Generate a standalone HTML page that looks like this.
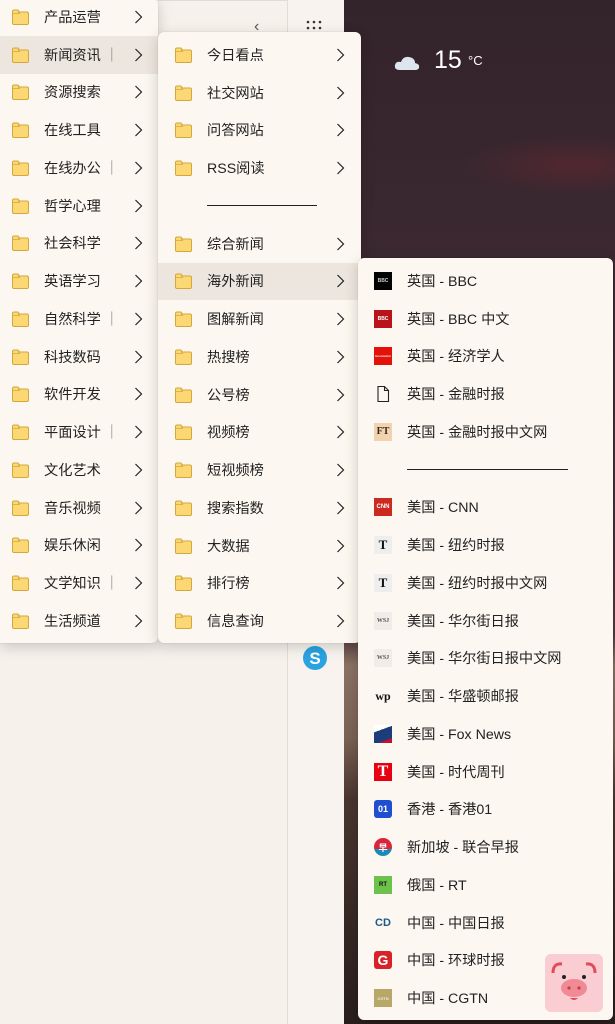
<!DOCTYPE html>
<html><head><meta charset="utf-8"><style>
*{margin:0;padding:0;box-sizing:border-box}
body{width:615px;height:1024px;overflow:hidden;position:relative;background:#f6f1eb;font-family:"Liberation Sans","Noto Sans CJK SC",sans-serif;color:#222}
.bgr{position:absolute;left:344px;top:0;width:271px;height:1024px;background:
radial-gradient(ellipse 110px 30px at 230px 165px,rgba(130,40,50,.35),transparent),
radial-gradient(ellipse 140px 60px at 230px 580px,rgba(110,40,45,.3),transparent),
linear-gradient(180deg,#33232b 0%,#3d2a32 30%,#46303a 55%,#553c40 62%,#8a7264 65%,#7a6254 72%,#4a3630 78%,#3a2a26 88%,#2a1e1c 100%)}
.col2{position:absolute;left:287px;top:0;width:57px;height:1024px;background:#f8f3ee;border-left:1px solid #e2ddd7}
.top1{position:absolute;left:158px;top:0;width:129px;height:1px;background:#ddd}
.menu{position:absolute;background:#fcf7f0;border-radius:6px;box-shadow:0 4px 14px rgba(0,0,0,.18),0 0 1px rgba(0,0,0,.2)}
.it{height:37.75px;display:flex;align-items:center;position:relative;font-size:14.2px;white-space:nowrap}
.it.h{background:#ede6de}
.ic{position:absolute;top:50%;transform:translateY(-50%);width:19px;height:17px}
.ch{position:absolute;top:50%;transform:translateY(-50%);width:9px;height:14px}
.sep{height:37.75px;position:relative}
.sep div{position:absolute;top:18px;height:1.4px;background:#222}
.lg{position:absolute;left:16px;top:50%;transform:translateY(-50%);width:18px;height:18px;font-size:6px;display:flex;align-items:center;justify-content:center;font-weight:bold;overflow:hidden}
.bar{color:#777}
</style></head><body>
<div class="bgr"></div>
<div class="col2"></div>
<div class="top1"></div>
<div style="position:absolute;left:254px;top:18px;font-size:16px;color:#555">‹</div>
<svg style="position:absolute;left:306px;top:20px" width="16" height="14"><g fill="#333"><circle cx="2" cy="2" r="1.3"/><circle cx="8" cy="2" r="1.3"/><circle cx="14" cy="2" r="1.3"/><circle cx="2" cy="8" r="1.3"/><circle cx="8" cy="8" r="1.3"/><circle cx="14" cy="8" r="1.3"/></g></svg>
<svg style="position:absolute;left:394px;top:54px" width="26" height="18"><path d="M6 16 Q0 16 1 11 Q2 7 7 8 Q9 2 15 3 Q21 4 21 9 Q26 10 25 14 Q24 16 21 16 Z" fill="#dde6ee"/></svg>
<div style="position:absolute;left:434px;top:46px;font-size:25px;color:#fff">15</div>
<div style="position:absolute;left:468px;top:53px;font-size:13px;color:#fff">°C</div>
<svg style="position:absolute;left:302px;top:645px" width="26" height="26"><circle cx="13" cy="13" r="12" fill="#2aa3e0"/><text x="13" y="19" font-size="17" font-weight="bold" fill="#fff" text-anchor="middle" font-family="Liberation Sans">S</text></svg>

<svg width="0" height="0" style="position:absolute"><defs>
<symbol id="f" viewBox="0 0 19 17"><path d="M1.5 3 Q1.5 1.5 3 1.5 H7 L8.5 3.5 H16 Q17.5 3.5 17.5 5 V14.5 Q17.5 16 16 16 H3 Q1.5 16 1.5 14.5 Z" fill="#fbd874" stroke="#d4a73c" stroke-width="1"/><path d="M1.5 5 H8.5 L7 3" fill="none" stroke="#d4a73c" stroke-width=".8"/></symbol>
<symbol id="c" viewBox="0 0 9 14"><path d="M1.5 1 L7.5 7 L1.5 13" fill="none" stroke="#222" stroke-width="1.2"/></symbol>
</defs></svg>

<!-- Menu 1 -->
<div class="menu" style="left:0;top:-2px;width:158px;height:645px;border-radius:0 6px 6px 0">
<div class="it"><svg class="ic" style="left:11px"><use href="#f"/></svg><span style="margin-left:44px">产品运营</span><svg class="ch" style="left:134px"><use href="#c"/></svg></div>
<div class="it h"><svg class="ic" style="left:11px"><use href="#f"/></svg><span style="margin-left:44px">新闻资讯 <span class="bar">｜</span></span><svg class="ch" style="left:134px"><use href="#c"/></svg></div>
<div class="it"><svg class="ic" style="left:11px"><use href="#f"/></svg><span style="margin-left:44px">资源搜索</span><svg class="ch" style="left:134px"><use href="#c"/></svg></div>
<div class="it"><svg class="ic" style="left:11px"><use href="#f"/></svg><span style="margin-left:44px">在线工具</span><svg class="ch" style="left:134px"><use href="#c"/></svg></div>
<div class="it"><svg class="ic" style="left:11px"><use href="#f"/></svg><span style="margin-left:44px">在线办公 <span class="bar">｜</span></span><svg class="ch" style="left:134px"><use href="#c"/></svg></div>
<div class="it"><svg class="ic" style="left:11px"><use href="#f"/></svg><span style="margin-left:44px">哲学心理</span><svg class="ch" style="left:134px"><use href="#c"/></svg></div>
<div class="it"><svg class="ic" style="left:11px"><use href="#f"/></svg><span style="margin-left:44px">社会科学</span><svg class="ch" style="left:134px"><use href="#c"/></svg></div>
<div class="it"><svg class="ic" style="left:11px"><use href="#f"/></svg><span style="margin-left:44px">英语学习</span><svg class="ch" style="left:134px"><use href="#c"/></svg></div>
<div class="it"><svg class="ic" style="left:11px"><use href="#f"/></svg><span style="margin-left:44px">自然科学 <span class="bar">｜</span></span><svg class="ch" style="left:134px"><use href="#c"/></svg></div>
<div class="it"><svg class="ic" style="left:11px"><use href="#f"/></svg><span style="margin-left:44px">科技数码</span><svg class="ch" style="left:134px"><use href="#c"/></svg></div>
<div class="it"><svg class="ic" style="left:11px"><use href="#f"/></svg><span style="margin-left:44px">软件开发</span><svg class="ch" style="left:134px"><use href="#c"/></svg></div>
<div class="it"><svg class="ic" style="left:11px"><use href="#f"/></svg><span style="margin-left:44px">平面设计 <span class="bar">｜</span></span><svg class="ch" style="left:134px"><use href="#c"/></svg></div>
<div class="it"><svg class="ic" style="left:11px"><use href="#f"/></svg><span style="margin-left:44px">文化艺术</span><svg class="ch" style="left:134px"><use href="#c"/></svg></div>
<div class="it"><svg class="ic" style="left:11px"><use href="#f"/></svg><span style="margin-left:44px">音乐视频</span><svg class="ch" style="left:134px"><use href="#c"/></svg></div>
<div class="it"><svg class="ic" style="left:11px"><use href="#f"/></svg><span style="margin-left:44px">娱乐休闲</span><svg class="ch" style="left:134px"><use href="#c"/></svg></div>
<div class="it"><svg class="ic" style="left:11px"><use href="#f"/></svg><span style="margin-left:44px">文学知识 <span class="bar">｜</span></span><svg class="ch" style="left:134px"><use href="#c"/></svg></div>
<div class="it"><svg class="ic" style="left:11px"><use href="#f"/></svg><span style="margin-left:44px">生活频道</span><svg class="ch" style="left:134px"><use href="#c"/></svg></div>
</div>

<!-- Menu 2 -->
<div class="menu" style="left:158px;top:32px;width:203px;height:611px;padding-top:4px">
<div class="it"><svg class="ic" style="left:16px"><use href="#f"/></svg><span style="margin-left:49px">今日看点</span><svg class="ch" style="left:178px"><use href="#c"/></svg></div>
<div class="it"><svg class="ic" style="left:16px"><use href="#f"/></svg><span style="margin-left:49px">社交网站</span><svg class="ch" style="left:178px"><use href="#c"/></svg></div>
<div class="it"><svg class="ic" style="left:16px"><use href="#f"/></svg><span style="margin-left:49px">问答网站</span><svg class="ch" style="left:178px"><use href="#c"/></svg></div>
<div class="it"><svg class="ic" style="left:16px"><use href="#f"/></svg><span style="margin-left:49px">RSS阅读</span><svg class="ch" style="left:178px"><use href="#c"/></svg></div>
<div class="sep"><div style="left:49px;width:110px"></div></div>
<div class="it"><svg class="ic" style="left:16px"><use href="#f"/></svg><span style="margin-left:49px">综合新闻</span><svg class="ch" style="left:178px"><use href="#c"/></svg></div>
<div class="it h"><svg class="ic" style="left:16px"><use href="#f"/></svg><span style="margin-left:49px">海外新闻</span><svg class="ch" style="left:178px"><use href="#c"/></svg></div>
<div class="it"><svg class="ic" style="left:16px"><use href="#f"/></svg><span style="margin-left:49px">图解新闻</span><svg class="ch" style="left:178px"><use href="#c"/></svg></div>
<div class="it"><svg class="ic" style="left:16px"><use href="#f"/></svg><span style="margin-left:49px">热搜榜</span><svg class="ch" style="left:178px"><use href="#c"/></svg></div>
<div class="it"><svg class="ic" style="left:16px"><use href="#f"/></svg><span style="margin-left:49px">公号榜</span><svg class="ch" style="left:178px"><use href="#c"/></svg></div>
<div class="it"><svg class="ic" style="left:16px"><use href="#f"/></svg><span style="margin-left:49px">视频榜</span><svg class="ch" style="left:178px"><use href="#c"/></svg></div>
<div class="it"><svg class="ic" style="left:16px"><use href="#f"/></svg><span style="margin-left:49px">短视频榜</span><svg class="ch" style="left:178px"><use href="#c"/></svg></div>
<div class="it"><svg class="ic" style="left:16px"><use href="#f"/></svg><span style="margin-left:49px">搜索指数</span><svg class="ch" style="left:178px"><use href="#c"/></svg></div>
<div class="it"><svg class="ic" style="left:16px"><use href="#f"/></svg><span style="margin-left:49px">大数据</span><svg class="ch" style="left:178px"><use href="#c"/></svg></div>
<div class="it"><svg class="ic" style="left:16px"><use href="#f"/></svg><span style="margin-left:49px">排行榜</span><svg class="ch" style="left:178px"><use href="#c"/></svg></div>
<div class="it"><svg class="ic" style="left:16px"><use href="#f"/></svg><span style="margin-left:49px">信息查询</span><svg class="ch" style="left:178px"><use href="#c"/></svg></div>
</div>

<!-- Menu 3 -->
<div class="menu" style="left:358px;top:258px;width:255px;height:762px;padding-top:4px">
<div class="it"><div class="lg" style="background:#000;color:#ccc;font-size:5px">BBC</div><span style="margin-left:49px">英国 - BBC</span></div>
<div class="it"><div class="lg" style="background:#b8141a;color:#fff;font-size:5px">BBC</div><span style="margin-left:49px">英国 - BBC 中文</span></div>
<div class="it"><div class="lg" style="background:#e3120b;color:#fff;font-size:3px">Economist</div><span style="margin-left:49px">英国 - 经济学人</span></div>
<div class="it"><svg class="lg" viewBox="0 0 18 18" style="background:none"><path d="M4 1.5 H10.5 L14.5 5.5 V16.5 H4 Z M10.5 1.5 V5.5 H14.5" fill="none" stroke="#222" stroke-width="1.1"/></svg><span style="margin-left:49px">英国 - 金融时报</span></div>
<div class="it"><div class="lg" style="background:#f2d3b0;color:#3a2a1a;font-family:'Liberation Serif',serif;font-size:10px">FT</div><span style="margin-left:49px">英国 - 金融时报中文网</span></div>
<div class="sep"><div style="left:49px;width:161px"></div></div>
<div class="it"><div class="lg" style="background:#cc2a20;color:#fff;font-size:6px">CNN</div><span style="margin-left:49px">美国 - CNN</span></div>
<div class="it"><div class="lg" style="background:#eee;color:#111;font-family:'Liberation Serif',serif;font-size:13px">T</div><span style="margin-left:49px">美国 - 纽约时报</span></div>
<div class="it"><div class="lg" style="background:#eee;color:#111;font-family:'Liberation Serif',serif;font-size:13px">T</div><span style="margin-left:49px">美国 - 纽约时报中文网</span></div>
<div class="it"><div class="lg" style="background:#f0ece8;color:#555;font-family:'Liberation Serif',serif">WSJ</div><span style="margin-left:49px">美国 - 华尔街日报</span></div>
<div class="it"><div class="lg" style="background:#f0ece8;color:#555;font-family:'Liberation Serif',serif">WSJ</div><span style="margin-left:49px">美国 - 华尔街日报中文网</span></div>
<div class="it"><div class="lg" style="background:none;color:#111;font-family:'Liberation Serif',serif;font-size:12px">wp</div><span style="margin-left:49px">美国 - 华盛顿邮报</span></div>
<div class="it"><div class="lg" style="background:linear-gradient(160deg,#fff 0 30%,#1d3c7a 30% 80%,#c8102e 80%)"></div><span style="margin-left:49px">美国 - Fox News</span></div>
<div class="it"><div class="lg" style="background:#e60012;color:#fff;font-family:'Liberation Serif',serif;font-size:16px">T</div><span style="margin-left:49px">美国 - 时代周刊</span></div>
<div class="it"><div class="lg" style="background:#1f4fd0;color:#fff;font-size:9px;border-radius:3px">01</div><span style="margin-left:49px">香港 - 香港01</span></div>
<div class="it"><div class="lg" style="background:linear-gradient(#d8253a 60%,#1a8bb8 60%);border-radius:50%;color:#fff;font-size:9px">早</div><span style="margin-left:49px">新加坡 - 联合早报</span></div>
<div class="it"><div class="lg" style="background:#6cc24a;color:#111;font-size:6px">RT</div><span style="margin-left:49px">俄国 - RT</span></div>
<div class="it"><div class="lg" style="background:none;color:#1d5a8a;font-size:11px">CD</div><span style="margin-left:49px">中国 - 中国日报</span></div>
<div class="it"><div class="lg" style="background:#d8222a;color:#fff;font-size:14px;border-radius:3px">G</div><span style="margin-left:49px">中国 - 环球时报</span></div>
<div class="it"><div class="lg" style="background:#b9a767;color:#eee;font-size:4px">CGTN</div><span style="margin-left:49px">中国 - CGTN</span></div>
</div>

<!-- pig -->
<svg style="position:absolute;left:544px;top:953px" width="60" height="60" viewBox="0 0 60 60">
<rect x="1" y="1" width="58" height="58" rx="6" fill="#f9cdd2"/>
<path d="M9 20 Q9 10 18 11" fill="none" stroke="#e24a5a" stroke-width="3"/>
<path d="M51 20 Q51 10 42 11" fill="none" stroke="#e24a5a" stroke-width="3"/>
<circle cx="20" cy="24" r="2" fill="#222"/><circle cx="40" cy="24" r="2" fill="#222"/>
<ellipse cx="30" cy="35" rx="13" ry="9" fill="#f08a95"/>
<circle cx="25" cy="35" r="1.6" fill="#c04050"/><circle cx="35" cy="35" r="1.6" fill="#c04050"/>
<path d="M26 45 Q30 49 34 45" fill="#e24a5a"/>
</svg>
</body></html>
